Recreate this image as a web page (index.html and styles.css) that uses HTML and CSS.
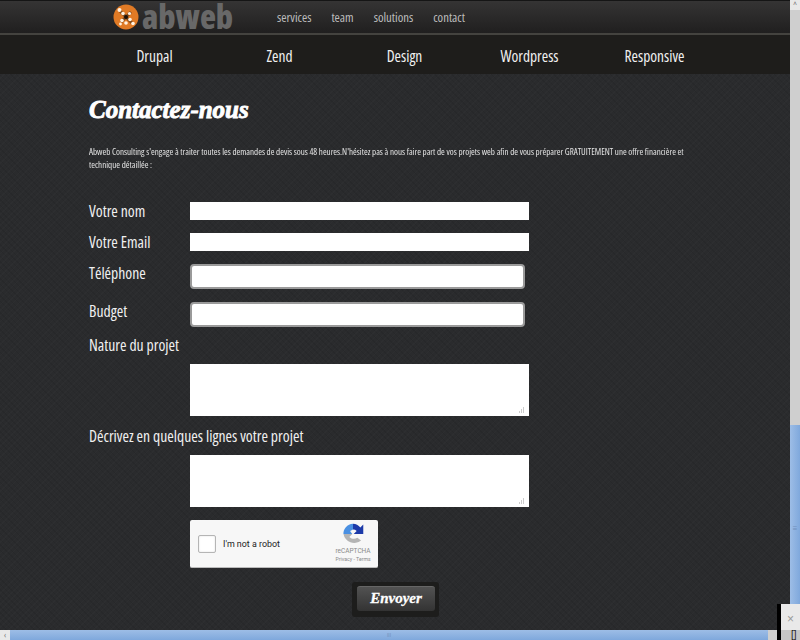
FILE: index.html
```html
<!DOCTYPE html>
<html lang="fr">
<head>
<meta charset="utf-8">
<title>Contactez-nous</title>
<link rel="stylesheet" href="styles.css">
</head>
<body>
<div class="window">
  <div class="viewport">
    <header class="topbar">
      <a class="logo" href="#">
        <svg class="logo-mark" width="26" height="26" viewBox="0 0 26 26">
          <circle cx="13" cy="13" r="12.5" fill="#e07a25"/>
          <path d="M7 7L19 19M18 8L8 18" stroke="#3a2412" stroke-width="3" opacity=".55"/>
          <circle cx="13" cy="13" r="2" fill="#1c120a"/>
          <g fill="#fff3e2">
            <circle cx="6.5" cy="6" r="2"/><circle cx="10" cy="9.5" r="1.8"/><circle cx="16.5" cy="9.5" r="1.6"/>
            <circle cx="9" cy="16.5" r="1.8"/><circle cx="13" cy="19" r="1.8"/><circle cx="17" cy="15.5" r="1.8"/><circle cx="20" cy="19.5" r="1.8"/><circle cx="7.500" cy="20" r="1.400"/>
          </g>
        </svg>
        <span class="logo-text">abweb</span>
      </a>
      <nav class="topnav">
        <a href="#">services</a>
        <a href="#">team</a>
        <a href="#">solutions</a>
        <a href="#">contact</a>
      </nav>
    </header>
    <nav class="mainnav">
      <a href="#">Drupal</a>
      <a href="#">Zend</a>
      <a href="#">Design</a>
      <a href="#">Wordpress</a>
      <a href="#">Responsive</a>
    </nav>
    <main class="content">
      <h1 class="title">Contactez-nous</h1>
      <p class="intro">Abweb Consulting s'engage à traiter toutes les demandes de devis sous 48 heures.N'hésitez pas à nous faire part de vos projets web afin de vous préparer GRATUITEMENT une offre financière et technique détaillée :</p>
      <form class="form">
        <div class="row row-plain"><label>Votre nom</label><input class="field" type="text"></div>
        <div class="row row-plain"><label>Votre Email</label><input class="field" type="text"></div>
        <div class="row row-round"><label>Téléphone</label><input class="field field-round" type="text"></div>
        <div class="row row-round row-last"><label>Budget</label><input class="field field-round" type="text"></div>
        <label class="block-label">Nature du projet</label>
        <textarea class="area"></textarea>
        <label class="block-label block-label-2">Décrivez en quelques lignes votre projet</label>
        <textarea class="area"></textarea>
        <div class="captcha">
          <span class="check"></span>
          <span class="robot">I'm not a robot</span>
          <div class="badge">
            <svg width="22" height="22" viewBox="0 0 30 30">
              <path d="M2 15H14L10 19 13 21A9 9 0 0 0 21 20L26 24A15 15 0 0 1 2 15Z" fill="#b4b4b4"/>
              <path d="M2 16A13.500 13.500 0 0 1 15 1V9L11 11 14 15H2Z" fill="#4a90e2"/>
              <path d="M15 1A14 14 0 0 1 25 6L29 2V15H16L20 11A7 7 0 0 0 15 9Z" fill="#1c3aa9"/>
            </svg>
            <span class="badge-name">reCAPTCHA</span>
            <span class="badge-links">Privacy - Terms</span>
          </div>
        </div>
        <div class="submit-wrap"><button class="submit" type="button">Envoyer</button></div>
      </form>
    </main>
  </div>
  <div class="vbar">
    <span class="arrow">^</span>
    <span class="vtrack"></span>
    <span class="vthumb"><i>≡</i></span>
  </div>
  <div class="hbar">
    <span class="arrow">‹</span>
    <span class="hthumb"><i>III</i></span>
    <span class="htrack"></span>
  </div>
  <div class="corner"></div>
  <div class="popup">
    <span class="popup-close">×</span>
    <span class="popup-foot">[]</span>
  </div>
</div>
</body>
</html>
```
FILE: styles.css
```css
* { box-sizing: border-box; }
html, body { margin: 0; padding: 0; height: 100%; overflow: hidden; }
body { font-family: "Open Sans", "Liberation Sans", sans-serif; font-stretch: 75%; background: #2a2b2d; }
a { color: inherit; text-decoration: none; }

.window {
  position: relative;
  display: grid;
  grid-template-columns: 790px 10px;
  grid-template-rows: 630px 10px;
  width: 800px;
  height: 640px;
  overflow: hidden;
}
.viewport {
  overflow: hidden;
  background-color: #2a2b2d;
  background-image:
    repeating-linear-gradient(45deg, rgba(0,0,0,.07) 0 1px, transparent 1px 4px),
    repeating-linear-gradient(-45deg, rgba(255,255,255,.015) 0 1px, transparent 1px 4px);
}

.topbar {
  display: flex;
  align-items: center;
  height: 35px;
  padding-left: 113px;
  border-top: 1px solid #151515;
  border-bottom: 2px solid #44433f;
  background-color: #2b2a2a;
  background-image: linear-gradient(#353434, #201f1f);
}
.logo { display: flex; align-items: center; gap: 3px; width: 164px; }
.logo-mark { flex: none; }
.logo-text {
  font-weight: 800;
  font-size: 33px;
  line-height: 46px;
  color: #686868;
}
.topnav { display: flex; gap: 20px; color: #bdbdbd; font-size: 12.700px; }

.mainnav {
  display: grid;
  grid-template-columns: repeat(5, 125px);
  align-items: center;
  height: 39px;
  padding: 2px 0 0 92px;
  background: #1e1d1b;
  color: #f0f0f0;
  font-size: 15.500px;
  text-align: center;
}

.content { padding: 20px 0 0 89px; color: #eee; }
.title {
  margin: 0;
  height: 31px;
  font-family: "Liberation Serif", serif;
  font-stretch: normal;
  font-style: italic;
  font-weight: 700;
  font-size: 25px;
  line-height: 31px;
  color: #fff;
  -webkit-text-stroke: .9px #fff;
}
.intro {
  width: 610px;
  margin: 20px 0 0;
  font-size: 9px;
  line-height: 13px;
  color: #e4e4e4;
  opacity: .99;
  will-change: opacity;
}

.form { margin-top: 31px; display: flex; flex-direction: column; align-items: flex-start; }
.row { display: grid; grid-template-columns: 101px auto; align-items: start; color: #f0f0f0; font-size: 15.700px; }
.row label { line-height: 18px; }
.row-plain { height: 31px; }
.row-round { height: 38px; }
.row-last { height: 35px; }
.field { display: block; width: 339px; height: 18px; margin: 0; padding: 0; border: 0; background: #fff; }
.field-round { width: 335px; height: 25px; border: 2px solid #9a9a9a; border-radius: 4px; }
.block-label { display: block; height: 19px; line-height: 16px; font-size: 15.700px; color: #f0f0f0; }
.block-label-2 { margin-top: 12px; }
.area {
  display: block;
  width: 339px;
  height: 52px;
  margin: 8px 0 0 101px;
  padding: 0;
  border: 0;
  resize: none;
  background-color: #fff;
  background-image: linear-gradient(#ccc, #ccc), linear-gradient(#ccc, #ccc), linear-gradient(#ccc, #ccc);
  background-repeat: no-repeat;
  background-size: 1px 2px, 1px 4px, 1px 6px;
  background-position: right 9px bottom 3px, right 7px bottom 3px, right 5px bottom 3px;
}

.captcha {
  display: flex;
  align-items: center;
  width: 188px;
  height: 48px;
  margin: 13px 0 0 101px;
  padding-left: 8px;
  background: #f7f7f7;
  border-bottom: 1px solid #bbb;
  border-radius: 2px;
  font-family: "Roboto", sans-serif;
  font-stretch: normal;
  color: #222;
}
.check { width: 18px; height: 18px; border: 1px solid #b5b5b5; border-radius: 2px; background: #fff; box-shadow: inset 0 0 2px #ddd; }
.robot { margin-left: 7px; font-size: 8.900px; }
.badge { display: flex; flex-direction: column; align-items: center; margin-left: auto; width: 50px; color: #8a8a8a; }
.badge svg { display: block; margin-bottom: 2px; }
.badge-name { font-size: 6.500px; line-height: 8px; }
.badge-links { font-size: 5.200px; line-height: 9px; }

.submit-wrap {
  align-self: flex-start;
  margin: 14px 0 0 263px;
  padding: 4px 4px 6px 5px;
  background: #1d1d1c;
  border-radius: 3px;
}
.submit {
  display: block;
  width: 78px;
  height: 25px;
  padding: 0 0 2px;
  border: 0;
  border-top: 1px solid #666;
  border-radius: 3px;
  background: linear-gradient(#525252, #333);
  color: #fff;
  font-family: "Liberation Serif", serif;
  font-style: italic;
  font-weight: 700;
  font-size: 15px;
  -webkit-text-stroke: .3px #fff;
}

.vbar { display: flex; flex-direction: column; background: #d2d2d2; }
.vtrack { height: 415px; background: #cfcfcf; }
.vthumb { flex: 1; display: flex; align-items: center; justify-content: center; background: linear-gradient(90deg, #9dbde6, #7fa8dc); color: #6f8fbc; font-size: 8px; }
.vthumb i, .hthumb i { font-style: normal; }
.arrow { display: flex; align-items: center; justify-content: center; width: 10px; height: 10px; flex: none; background: #e8e8e8; color: #777; font-size: 8px; line-height: 10px; }
.hbar { display: flex; background: #d2d2d2; }
.hthumb { display: flex; align-items: center; justify-content: center; width: 758px; background: linear-gradient(#9dbde6, #7fa8dc); color: #6f8fbc; font-size: 6px; }
.htrack { flex: 1; background: #cfcfcf; }
.corner { background: #cfcfcf; }

.popup {
  position: absolute;
  left: 777px;
  top: 604px;
  width: 23px;
  height: 36px;
  border-left: 4px solid #000;
  background: #e9e9e9;
  color: #999;
}
.popup-close { display: block; height: 26px; text-align: center; font: 12px/30px "Liberation Sans", sans-serif; }
.popup-foot { display: block; height: 10px; padding-left: 10px; background: #c6c6c6; color: #222; font: 10px/9px "Liberation Sans", sans-serif; }
```
